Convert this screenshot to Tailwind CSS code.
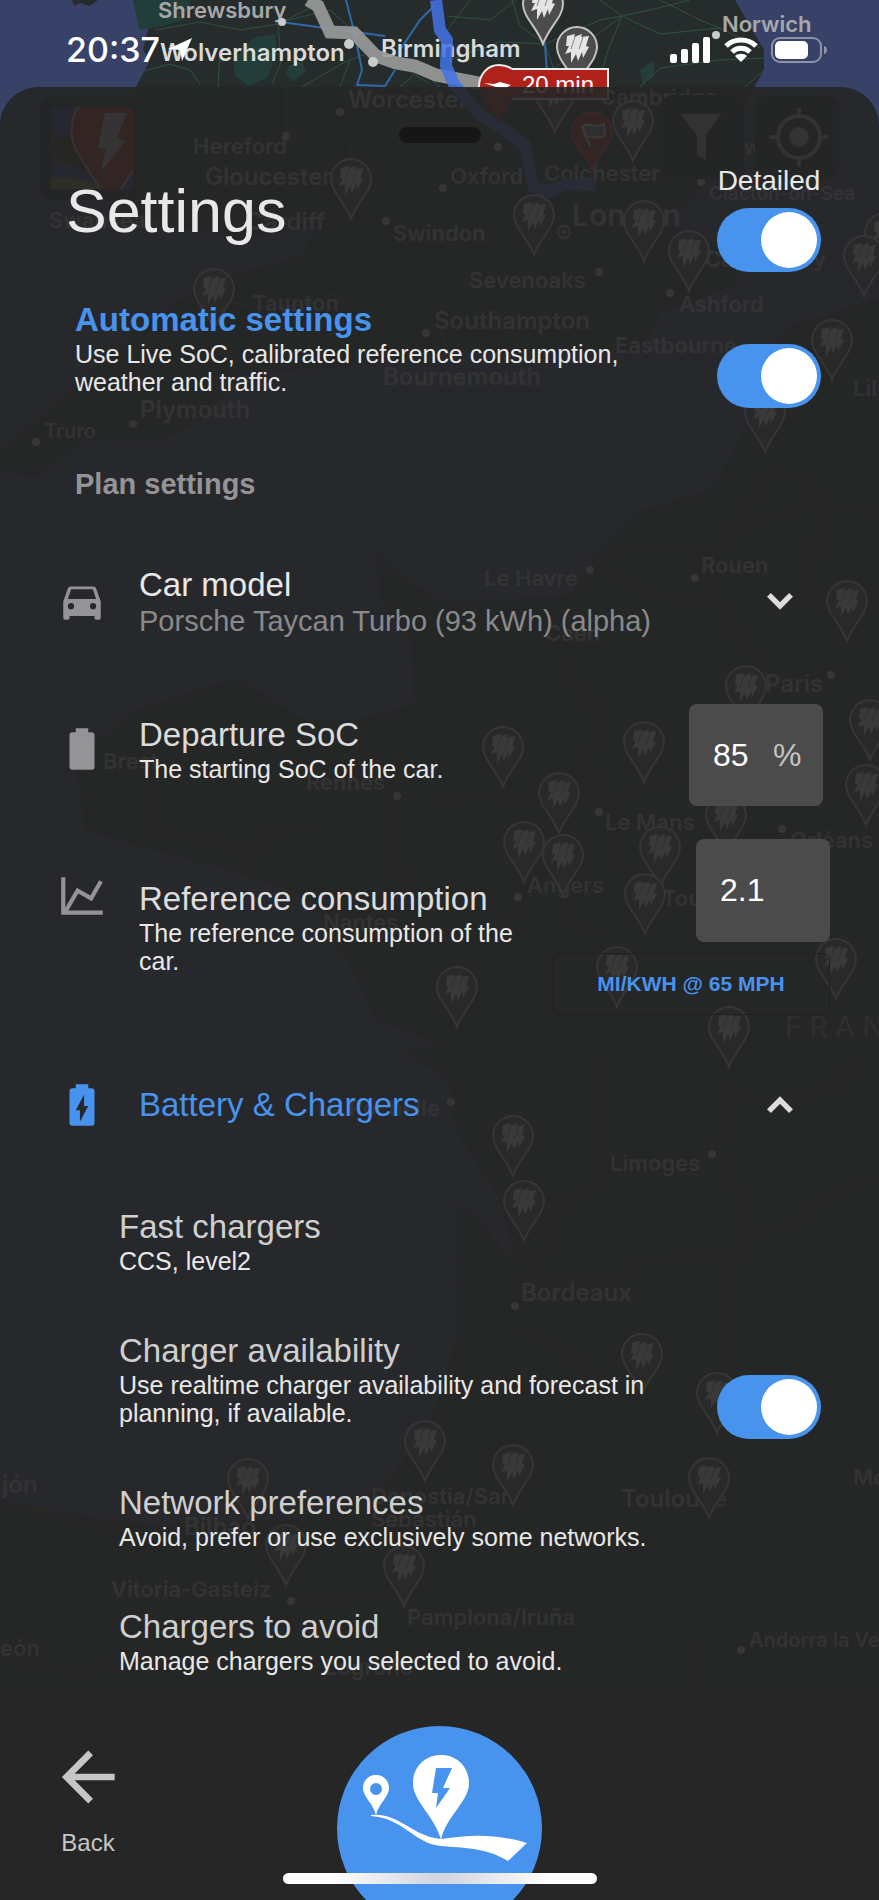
<!DOCTYPE html>
<html lang="en">
  <head>
    <meta charset="UTF-8" />
    <meta name="viewport" content="width=device-width, initial-scale=1.0" />
    <title>Settings</title>
    <script src="https://cdn.jsdelivr.net/npm/@tailwindcss/browser@4"></script>
  </head>
  <body class="bg-[#262626] font-['Liberation_Sans',sans-serif] text-[#e8e8e8]">
    <div class="relative min-h-screen flex flex-col overflow-hidden">
      <!-- Map -->
      <svg
        class="absolute inset-0 w-full h-full bg-[#384268]"
        viewBox="0 0 879 1900"
        preserveAspectRatio="xMidYMin slice"
        aria-hidden="true"
      >
        <defs>
          <g id="pin">
            <path d="M0 1C-11 1-20 10-20 21C-20 34-6 44 0 61C6 44 20 34 20 21C20 10 11 1 0 1Z" fill="#4c4c4c" stroke="#c4c4c4" stroke-width="2" />
            <path d="M-10 10L-2 8L-3 11L5 8L4 11L12 10L9 20L12 21L6 32L5 26L1 35L-1 28L-6 37L-6 26L-12 28L-8 20L-11 20Z" fill="#e4e4e4" />
            <path d="M-2 11L-6 23M6 11L2 23" stroke="#888" stroke-width="1" />
          </g>
        </defs>

        <!-- Land -->
        <g fill="#262c2b">
          <path d="M142 0L150 20L143 50L150 60L136 87L128 130L100 200L170 225L240 240L320 225L300 255L250 270L200 285L130 335L60 400L0 450V472L35 478L85 440L160 442L205 418L240 375L350 365L440 352L640 352L662 312L735 285L745 250L660 225L690 200L725 160L750 95L764 70L764 50L735 0Z" />
          <path d="M72 0h26l-8 6l-10-3l-6 3Z" />
          <path d="M879 298L790 325L748 380L745 430L710 490L640 510L590 560L570 595L440 602L395 570L375 545L380 600L410 640L415 705L360 718L300 718L240 678L195 690L130 712L75 762L85 830L150 850L220 868L290 890L320 920L352 970L375 1020L440 1045L400 1050L450 1082L455 1130L500 1200L515 1260L458 1200L455 1340L430 1425L380 1490L290 1520L150 1525L80 1515L0 1500V1900H879Z" />
        </g>
        <g fill="#233d3a">
          <path d="M233 60l20-22l22-4l2 20l-10 24l-18 8l-14-10Z" />
          <path d="M288 66l14-6l4 12l-12 9l-8-6Z" />
          <path d="M133 0h58l-8 20l-20 6l-24 4Z" />
          <path d="M640 70l14-10v16l-12 8Z" />
        </g>

        <!-- Roads -->
        <g fill="none" stroke="#2f5044" stroke-width="1">
          <path d="M155 30L200 22L240 30L278 24L310 8M278 24L281 62L272 84M281 22L330 10L350 28L362 40M140 72L170 64L190 70L200 84M218 87L220 50M302 87L345 62L375 50L430 84" />
          <path d="M440 40L470 0M447 16L490 20L516 0M512 0L520 26L545 44L600 20L622 16L660 34L720 28L760 48M622 16L608 50L598 87M540 80L590 40L622 16M640 87L660 68L720 60L764 58M450 60L500 42L545 44L560 87M660 0L700 20L720 28M350 60L340 87M400 87L420 70L440 87M600 0L622 16L650 10L690 0M745 87L764 70" />
          <path d="M286 87V136M350 140L352 158M210 300L280 310L350 290M470 400L440 330" stroke-width="2" />
        </g>
        <g fill="none" stroke="#2f68a8" stroke-width="2">
          <path d="M281 22L340 30L385 36M346 0L355 35L362 70L357 85L385 86L395 70M400 50L420 20L434 6M545 44L548 87" />
        </g>
        <g fill="none" stroke="#4b3a30" stroke-width="2">
          <path d="M770 470L745 510L735 530L715 550L640 545L590 560M770 470L805 480L818 500L815 560L800 600M735 527L780 515L815 508L879 512M690 545L712 590L740 640L760 658M594 568L640 590L690 600" />
          <path d="M440 800L500 797L550 808L610 800L640 790L690 775M560 660L596 710L590 760L594 810M612 830L615 860L640 875L670 900M520 900L500 940M565 905L580 930L600 930" />
          <path d="M145 780L145 830L190 835L240 850L290 825L320 828M260 828L250 870M395 790L395 850L405 900" />
          <path d="M600 1060V1180L560 1210L540 1260L525 1290M730 1080L718 1150L740 1200L745 1235L735 1260L735 1400M745 1235L790 1225L820 1200L865 1180M525 1280L620 1280L640 1258L735 1255M730 1095L780 1100L830 1090L860 1060M520 1330L560 1350L600 1375" />
          <path d="M0 1502L60 1515L120 1530L140 1560M290 1600L340 1600L400 1590L420 1620M0 1660L80 1672L150 1650M700 1640L690 1690" />
        </g>

        <!-- Places -->
        <g font-family="Inter, sans-serif" font-size="22" font-weight="600" fill="#a6a8aa">
          <text x="158" y="18">Shrewsbury</text>
          <text x="722" y="32">Norwich</text>
          <text x="193" y="154">Hereford</text>
          <text x="393" y="241">Swindon</text>
          <text x="450" y="184">Oxford</text>
          <text x="49" y="228">Swansea</text>
          <text x="600" y="105">Cambridge</text>
          <text x="544" y="181">Colchester</text>
          <text x="744" y="154" font-size="20">w</text>
          <text x="709" y="200" font-size="19">Clacton-on-Sea</text>
          <text x="469" y="288">Sevenoaks</text>
          <text x="705" y="267">Canterbury</text>
          <text x="679" y="312">Ashford</text>
          <text x="615" y="353">Eastbourne</text>
          <text x="252" y="311">Taunton</text>
          <text x="44" y="438" font-size="20">Truro</text>
          <text x="853" y="396">Lille</text>
          <text x="484" y="586">Le Havre</text>
          <text x="701" y="573">Rouen</text>
          <text x="545" y="641">Caen</text>
          <text x="605" y="830">Le Mans</text>
          <text x="790" y="848">Orléans</text>
          <text x="527" y="893">Angers</text>
          <text x="662" y="906">Tours</text>
          <text x="306" y="790">Rennes</text>
          <text x="103" y="769">Brest</text>
          <text x="323" y="930">Nantes</text>
          <text x="318" y="1116">La Rochelle</text>
          <text x="610" y="1171">Limoges</text>
          <text x="371" y="1504">Donostia/San</text>
          <text x="371" y="1527">Sebastián</text>
          <text x="111" y="1597">Vitoria-Gasteiz</text>
          <text x="407" y="1625">Pamplona/Iruña</text>
          <text x="325" y="1675">Logroño</text>
          <text x="749" y="1647" font-size="20">Andorra la Ve</text>
          <text x="0" y="1656">eón</text>
          <text x="853" y="1485">Mo</text>
        </g>
        <g font-family="Inter, sans-serif" font-size="24" font-weight="600" fill="#d8dadb">
          <text x="160" y="61">Wolverhampton</text>
          <text x="381" y="57">Birmingham</text>
        </g>
        <g font-family="Inter, sans-serif" font-size="24" font-weight="600" fill="#a6a8aa">
          <text x="348" y="108">Worcester</text>
          <text x="205" y="185">Gloucester</text>
          <text x="246" y="230">Cardiff</text>
          <text x="434" y="329">Southampton</text>
          <text x="383" y="385">Bournemouth</text>
          <text x="140" y="418">Plymouth</text>
          <text x="765" y="692">Paris</text>
          <text x="521" y="1301">Bordeaux</text>
          <text x="621" y="1507">Toulouse</text>
          <text x="184" y="1535">Bilbao</text>
          <text x="2" y="1493">jón</text>
        </g>
        <text x="572" y="226" font-family="Inter, sans-serif" font-size="30" font-weight="600" fill="#a6a8aa">London</text>
        <text x="785" y="1037" font-family="Inter, sans-serif" font-size="28" fill="#888">F R A N</text>

        <!-- Route -->
        <path d="M308 0L318 6L330 32L354 33L376 56L396 63L415 66L436 75L499 87" fill="none" stroke="#9b9b9b" stroke-opacity="0.9" stroke-width="13" />
        <path d="M436 0L440 30L447 40L446 66L454 84L480 115L505 130L525 145L533 186L548 192L565 184L596 185" fill="none" stroke="#4473e8" stroke-opacity="0.85" stroke-width="12" stroke-linejoin="round" />

        <g fill="#c9cbcc">
          <circle cx="282" cy="22" r="4" />
          <circle cx="349" cy="44" r="5" />
          <circle cx="373" cy="62" r="5" />
          <circle cx="716" cy="35" r="4" />
          <circle cx="340" cy="112" r="4" />
          <circle cx="286" cy="136" r="4" />
          <circle cx="386" cy="221" r="4" />
          <circle cx="498" cy="147" r="4" />
          <circle cx="443" cy="188" r="4" />
          <circle cx="599" cy="272" r="4" />
          <circle cx="670" cy="293" r="4" />
          <circle cx="426" cy="333" r="4" />
          <circle cx="701" cy="182" r="4" />
          <circle cx="133" cy="424" r="4" />
          <circle cx="36" cy="442" r="4" />
          <circle cx="590" cy="570" r="4" />
          <circle cx="695" cy="578" r="4" />
          <circle cx="831" cy="675" r="4" />
          <circle cx="599" cy="812" r="4" />
          <circle cx="518" cy="897" r="4" />
          <circle cx="782" cy="829" r="4" />
          <circle cx="397" cy="796" r="4" />
          <circle cx="451" cy="1102" r="4" />
          <circle cx="712" cy="1154" r="4" />
          <circle cx="515" cy="1306" r="4" />
          <circle cx="291" cy="1601" r="4" />
          <circle cx="741" cy="1650" r="4" />
        </g>
        <circle cx="564" cy="232" r="6" fill="none" stroke="#aaa" stroke-width="2" />
        <circle cx="564" cy="232" r="2" fill="#aaa" />

        <!-- Charger pins -->
        <use href="#pin" x="543" y="-17" />
        <use href="#pin" x="577" y="26" />
        <use href="#pin" x="555" y="71" />
        <use href="#pin" x="633" y="100" />
        <use href="#pin" x="534" y="194" />
        <use href="#pin" x="644" y="200" />
        <use href="#pin" x="689" y="230" />
        <use href="#pin" x="885" y="212" />
        <use href="#pin" x="864" y="235" />
        <use href="#pin" x="351" y="158" />
        <use href="#pin" x="214" y="268" />
        <use href="#pin" x="832" y="319" />
        <use href="#pin" x="765" y="391" />
        <use href="#pin" x="847" y="580" />
        <use href="#pin" x="746" y="665" />
        <use href="#pin" x="870" y="699" />
        <use href="#pin" x="866" y="764" />
        <use href="#pin" x="503" y="726" />
        <use href="#pin" x="644" y="721" />
        <use href="#pin" x="559" y="772" />
        <use href="#pin" x="726" y="794" />
        <use href="#pin" x="524" y="821" />
        <use href="#pin" x="563" y="834" />
        <use href="#pin" x="660" y="826" />
        <use href="#pin" x="645" y="873" />
        <use href="#pin" x="836" y="938" />
        <use href="#pin" x="617" y="946" />
        <use href="#pin" x="457" y="966" />
        <use href="#pin" x="729" y="1006" />
        <use href="#pin" x="513" y="1115" />
        <use href="#pin" x="524" y="1180" />
        <use href="#pin" x="642" y="1333" />
        <use href="#pin" x="717" y="1372" />
        <use href="#pin" x="425" y="1420" />
        <use href="#pin" x="513" y="1444" />
        <use href="#pin" x="248" y="1458" />
        <use href="#pin" x="709" y="1457" />
        <use href="#pin" x="286" y="1524" />
        <use href="#pin" x="404" y="1545" />

        <!-- Charging stop -->
        <path d="M510 69H608V99H510Z" fill="#b0211c" stroke="#eee" stroke-width="2" />
        <path d="M499 65C488 65 479 74 479 85C479 98 493 108 499 122C505 108 514 98 516 90L512 69C508 66 504 65 499 65Z" fill="#b0211c" />
        <path d="M479 87C479 74 488 65 499 65C504 65 508 66 512 69" fill="none" stroke="#eee" stroke-width="2" />
        <path d="M484 83L494 84L500 82L511 85L506 88L496 87Z" fill="#fff" />
        <text x="522" y="93" font-family="Liberation Sans, sans-serif" font-size="24" fill="#fff">20 min</text>
        <path d="M592 112C581 112 572 121 572 132C572 144 586 154 592 170C598 154 612 144 612 132C612 121 603 112 592 112Z" fill="#b0211c" stroke="#c44" stroke-width="2" />
        <path d="M582 126L590 146M582 127C590 120 595 130 604 124L605 136C597 141 592 133 586 138Z" fill="#888" stroke="#eee" stroke-width="2" />

        <!-- App logo and map buttons -->
        <rect x="40" y="97" width="103" height="103" rx="10" fill="#1c2222" />
        <rect x="51" y="107" width="82" height="82" fill="#3b3a8c" />
        <path d="M51 145L57 135L62 138L67 128L73 140L90 170L100 189H51Z" fill="#2e3b22" />
        <path d="M51 155C66 166 80 166 94 175L98 189H51Z" fill="#3b3a8c" />
        <path d="M51 178C70 178 85 178 105 189H51Z" fill="#6f7a2a" />
        <path d="M78 107H133V170L121 189H100L76 150C68 135 72 117 78 107Z" fill="#b0211c" />
        <path d="M78 107C72 117 68 135 76 150L100 189M121 189L133 170" fill="none" stroke="#c8a49a" stroke-width="2" />
        <path d="M105 113H127L117 137L125 141L101 171L106 149L98 148Z" fill="#b8b8b8" />
        <rect x="660" y="95" width="84" height="84" rx="14" fill="#1c2020" />
        <path d="M680 114H721L706 135V160L697 155V135Z" fill="#aaa" />
        <rect x="755" y="95" width="84" height="84" rx="14" fill="#1c2020" />
        <circle cx="799" cy="137" r="21" fill="none" stroke="#aaa" stroke-width="4" />
        <circle cx="799" cy="137" r="10" fill="#aaa" />
        <path d="M799 108V116M799 158V166M770 137H778M820 137H828" stroke="#aaa" stroke-width="4" />
      </svg>

      <!-- Status bar -->
      <header class="relative h-[87px] flex justify-between items-center pt-3 pl-[66px] pr-[51px] font-['Inter',sans-serif] text-white">
        <div class="flex items-center gap-2">
          <span class="text-[34px] leading-10 font-medium">20:37</span>
          <svg class="w-6 h-6" viewBox="0 0 24 24" fill="currentColor"><path d="M24 0L14 23L12 12L0 11Z" /></svg>
        </div>
        <div class="flex items-center gap-[13px]">
          <svg class="w-[41px] h-[26px]" viewBox="0 0 41 26" fill="currentColor">
            <rect x="0" y="17" width="7" height="9" rx="2" />
            <rect x="11" y="12" width="7" height="14" rx="2" />
            <rect x="22" y="6" width="7" height="20" rx="2" />
            <rect x="33" y="0" width="7" height="26" rx="2" />
          </svg>
          <svg class="w-[34px] h-[26px]" viewBox="0 0 34 26" fill="none" stroke="currentColor" stroke-width="5">
            <path d="M2 9C10 1 24 1 32 9" />
            <path d="M8 15C13 10 21 10 26 15" />
            <path d="M17 25L11 19C14 16 20 16 23 19Z" fill="currentColor" stroke="none" />
          </svg>
          <svg class="w-[57px] h-[26px]" viewBox="0 0 57 26">
            <rect x="1" y="1" width="49" height="24" rx="8" fill="none" stroke="#8d92a6" stroke-width="2" />
            <rect x="4" y="4" width="33" height="18" rx="5" fill="#fff" />
            <path d="M53 9C57 10 57 16 53 17Z" fill="#8d92a6" />
          </svg>
        </div>
      </header>

      <!-- Settings sheet -->
      <main class="relative flex-1 flex flex-col rounded-t-[38px] bg-[#262626]/90">
        <div class="self-center mt-10 w-[82px] h-4 rounded-full bg-[#161616]"></div>

        <div class="flex justify-between items-start mt-5 pl-[66px] pr-[58px]">
          <h1 class="mt-3 text-[61px] leading-[72px]">Settings</h1>
          <div class="flex flex-col items-center gap-[9px]">
            <label for="detailed" class="text-[28px] leading-9">Detailed</label>
            <input id="detailed" type="checkbox" role="switch" checked class="appearance-none shrink-0 w-[104px] h-16 p-1 rounded-full bg-[#555] checked:bg-[#4893ee] before:block before:size-14 before:rounded-full before:bg-white checked:before:ml-auto" />
          </div>
        </div>

        <div class="flex justify-between items-start mt-7 pl-[75px] pr-[58px]">
          <div>
            <label for="automatic" class="block text-[33px] leading-10 font-bold text-[#4893ee]">Automatic settings</label>
            <p class="max-w-[580px] text-[25px] leading-7">Use Live SoC, calibrated reference consumption, weather and traffic.</p>
          </div>
          <input id="automatic" type="checkbox" role="switch" checked class="appearance-none shrink-0 mt-11 -mb-3 w-[104px] h-16 p-1 rounded-full bg-[#555] checked:bg-[#4893ee] before:block before:size-14 before:rounded-full before:bg-white checked:before:ml-auto" />
        </div>

        <h2 class="mt-[72px] pl-[75px] text-[29px] leading-8 font-bold text-[#949496]">Plan settings</h2>

        <button class="flex items-center gap-8 mt-[65px] pl-[57px] pr-[74px] text-left">
          <svg class="size-[50px] shrink-0 text-[#949496]" viewBox="0 0 24 24" fill="currentColor" fill-rule="evenodd"><path d="M18.700 5.800Q18.400 5 17.500 5H6.500Q5.600 5 5.300 5.800L3 12.200V20.200Q3 21 3.800 21H5.200Q6 21 6 20.200V19.200H18V20.200Q18 21 18.800 21H20.200Q21 21 21 20.200V12.200ZM6.700 16A1.500 1.500 0 1 1 6.700 13A1.500 1.500 0 1 1 6.700 16ZM17.300 16A1.500 1.500 0 1 1 17.300 13A1.500 1.500 0 1 1 17.300 16ZM5.200 11L6.800 6.300H17.200L18.800 11Z" /></svg>
          <span class="flex-1">
            <span class="block text-[33px] leading-10">Car model</span>
            <span class="block text-[29px] leading-8 text-[#8a8a8c]">Porsche Taycan Turbo (93 kWh) (alpha)</span>
          </span>
          <svg class="size-[50px] shrink-0 text-[#dcdcdc]" viewBox="0 0 24 24" fill="none" stroke="currentColor" stroke-width="2.600"><path d="M6.700 9.100L12 14.400L17.300 9.100" /></svg>
        </button>

        <div class="flex items-center gap-8 mt-[67px] pl-[57px] pr-14">
          <svg class="size-[50px] shrink-0 mb-3 text-[#949496]" viewBox="0 0 24 24" fill="currentColor"><path d="M16.670 4H15V2H9V4H7.330A1.330 1.330 0 0 0 6 5.330V20.670C6 21.400 6.600 22 7.330 22H16.670A1.330 1.330 0 0 0 18 20.670V5.330C18 4.600 17.400 4 16.670 4Z" /></svg>
          <div class="flex-1 mb-3">
            <label for="departure" class="block text-[33px] leading-10 text-[#dcdcdc]">Departure SoC</label>
            <p class="text-[25px] leading-7">The starting SoC of the car.</p>
          </div>
          <div class="flex items-center w-[134px] h-[102px] px-6 rounded-lg bg-[#4b4b4b] text-[32px]">
            <input id="departure" type="text" inputmode="numeric" value="85" class="w-[60px] bg-transparent text-white outline-none" />
            <span class="text-[#c4c4c4]">%</span>
          </div>
        </div>

        <div class="flex items-center mt-[33px] pl-[57px] pr-[49px]">
          <svg class="size-[50px] shrink-0 self-start mt-8 mr-8 text-[#949496]" viewBox="0 0 24 24" fill="currentColor"><path d="M16 11.780L20.240 4.450L21.970 5.450L16.740 14.500L10.230 10.750L5.460 19H22V21H2V3H4V17.540L9.500 8L16 11.780Z" /></svg>
          <div class="flex-1 pr-4">
            <label for="consumption" class="block text-[33px] leading-10 text-[#dcdcdc]">Reference consumption</label>
            <p class="text-[25px] leading-7">The reference consumption of the car.</p>
          </div>
          <div class="flex flex-col items-end gap-[11px] w-[278px]">
            <input id="consumption" type="text" inputmode="decimal" value="2.1" class="w-[134px] h-[103px] px-6 rounded-lg bg-[#4b4b4b] text-[32px] text-white outline-none" />
            <button class="w-full h-[62px] rounded-lg border border-[#202020] text-[21px] font-bold text-[#4893ee]">MI/KWH @ 65 MPH</button>
          </div>
        </div>

        <button class="flex items-center gap-8 mt-[65px] pl-[57px] pr-[74px] text-left">
          <svg class="size-[50px] shrink-0 text-[#4893ee]" viewBox="0 0 24 24" fill="currentColor" fill-rule="evenodd"><path d="M16.670 4H15V2H9V4H7.330A1.330 1.330 0 0 0 6 5.330V20.670C6 21.400 6.600 22 7.330 22H16.670A1.330 1.330 0 0 0 18 20.670V5.330C18 4.600 17.400 4 16.670 4ZM11 20V14.500H9L13 7V12.500H15Z" /></svg>
          <span class="flex-1 text-[33px] leading-10 text-[#4893ee]">Battery &amp; Chargers</span>
          <svg class="size-[50px] shrink-0 text-[#dcdcdc]" viewBox="0 0 24 24" fill="none" stroke="currentColor" stroke-width="2.600"><path d="M6.700 14.900L12 9.600L17.300 14.900" /></svg>
        </button>

        <div class="flex flex-col gap-14 mt-[77px] pb-4 pl-[119px] pr-[58px]">
          <button class="text-left">
            <span class="block text-[33px] leading-10 text-[#cfcfcf]">Fast chargers</span>
            <span class="block text-[25px] leading-7">CCS, level2</span>
          </button>
          <div class="flex justify-between items-start">
            <div>
              <label for="availability" class="block text-[33px] leading-10 text-[#cfcfcf]">Charger availability</label>
              <p class="max-w-[580px] text-[25px] leading-7">Use realtime charger availability and forecast in planning, if available.</p>
            </div>
            <input id="availability" type="checkbox" role="switch" checked class="appearance-none shrink-0 mt-11 -mb-3 w-[104px] h-16 p-1 rounded-full bg-[#555] checked:bg-[#4893ee] before:block before:size-14 before:rounded-full before:bg-white checked:before:ml-auto" />
          </div>
          <button class="text-left">
            <span class="block text-[33px] leading-10 text-[#cfcfcf]">Network preferences</span>
            <span class="block text-[25px] leading-7">Avoid, prefer or use exclusively some networks.</span>
          </button>
          <button class="text-left">
            <span class="block text-[33px] leading-10 text-[#cfcfcf]">Chargers to avoid</span>
            <span class="block text-[25px] leading-7">Manage chargers you selected to avoid.</span>
          </button>
        </div>

        <!-- Bottom bar -->
        <footer class="relative mt-auto h-[205px] grid grid-cols-[1fr_auto_1fr] items-start bg-[#262626] overflow-hidden">
          <button class="justify-self-start flex flex-col items-center gap-3 mt-[42px] ml-12 text-[#c6c6c6]">
            <svg class="size-20" viewBox="0 0 24 24" fill="currentColor"><path d="M20 11V13H8L13.500 18.500L12.080 19.920L4.160 12L12.080 4.080L13.500 5.500L8 11H20Z" /></svg>
            <span class="text-2xl leading-7">Back</span>
          </button>
          <button class="mt-[31px] size-[205px] rounded-full bg-[#4893ee]" aria-label="Plan route">
            <svg class="w-full h-full" viewBox="0 0 205 205" fill="#fff">
              <path fill-rule="evenodd" d="M39 49C31 49 26 55 26 62C26 71 36 77 39 89C42 77 52 71 52 62C52 55 47 49 39 49ZM39 57A6 6 0 1 1 39 69A6 6 0 1 1 39 57Z" />
              <path d="M34 89C62 86 74 110 104 113C135 108 160 108 190 117L171 135C148 121 125 122 104 120C78 118 66 92 34 90Z" />
              <path d="M104 29C88 29 76 41 76 57C76 76 98 90 104 114C109 90 132 76 132 57C132 41 120 29 104 29Z" />
              <path fill="#4893ee" d="M99 42H115L106 62H113L99 82L101 67H95Z" />
            </svg>
          </button>
          <div class="absolute bottom-4 inset-x-0 mx-auto w-[314px] h-[11px] rounded-full bg-linear-to-r from-white from-15% via-[#d2d4de] to-white to-85%"></div>
        </footer>
      </main>
    </div>
  </body>
</html>
